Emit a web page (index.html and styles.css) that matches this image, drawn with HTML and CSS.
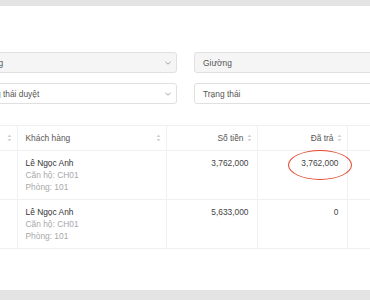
FILE: index.html
```html
<!DOCTYPE html>
<html lang="vi">
<head>
<meta charset="utf-8">
<title>Thanh toán</title>
<link rel="stylesheet" href="styles.css">
</head>
<body>
<div class="viewport">
  <div class="topbar"></div>
  <div class="content">
    <div class="filters">
      <div class="field disabled">
        <span class="field-text">Phòng</span>
        <svg class="chev" width="6" height="4" viewBox="0 0 6 4"><polyline points="0.5,0.8 3,3.2 5.5,0.8" fill="none" stroke="#9a9a9a" stroke-width="0.9"/></svg>
      </div>
      <div class="field disabled">
        <span class="field-text">Giường</span>
      </div>
      <div class="field">
        <span class="field-text">Trạng thái duyệt</span>
        <svg class="chev" width="6" height="4" viewBox="0 0 6 4"><polyline points="0.5,0.8 3,3.2 5.5,0.8" fill="none" stroke="#9a9a9a" stroke-width="0.9"/></svg>
      </div>
      <div class="field">
        <span class="field-text">Trạng thái</span>
      </div>
    </div>

    <table class="grid">
      <colgroup>
        <col class="c0"><col class="c1"><col class="c2"><col class="c3"><col class="c4">
      </colgroup>
      <thead>
        <tr>
          <th><div class="th end"><svg class="sort" width="5" height="8" viewBox="0 0 5 8"><path d="M2.5 0.5 L4.5 3 H0.5 Z M2.5 7.5 L4.5 5 H0.5 Z" fill="#d0d3d8"/></svg></div></th>
          <th><div class="th between"><span>Khách hàng</span><svg class="sort" width="5" height="8" viewBox="0 0 5 8"><path d="M2.5 0.5 L4.5 3 H0.5 Z M2.5 7.5 L4.5 5 H0.5 Z" fill="#d0d3d8"/></svg></div></th>
          <th><div class="th end"><span>Số tiền</span><svg class="sort" width="5" height="8" viewBox="0 0 5 8"><path d="M2.5 0.5 L4.5 3 H0.5 Z M2.5 7.5 L4.5 5 H0.5 Z" fill="#d0d3d8"/></svg></div></th>
          <th><div class="th end"><span>Đã trả</span><svg class="sort" width="5" height="8" viewBox="0 0 5 8"><path d="M2.5 0.5 L4.5 3 H0.5 Z M2.5 7.5 L4.5 5 H0.5 Z" fill="#d0d3d8"/></svg></div></th>
          <th></th>
        </tr>
      </thead>
      <tbody>
        <tr>
          <td></td>
          <td><div class="name">Lê Ngọc Anh</div><div class="sub">Căn hộ: CH01</div><div class="sub">Phòng: 101</div></td>
          <td class="num">3,762,000</td>
          <td class="num mark">3,762,000<span class="circle"></span></td>
          <td></td>
        </tr>
        <tr>
          <td></td>
          <td><div class="name">Lê Ngọc Anh</div><div class="sub">Căn hộ: CH01</div><div class="sub">Phòng: 101</div></td>
          <td class="num">5,633,000</td>
          <td class="num">0</td>
          <td></td>
        </tr>
      </tbody>
    </table>
  </div>
  <div class="bottombar"></div>
</div>
</body>
</html>
```

FILE: styles.css
```css
html, body {
  margin: 0;
  padding: 0;
  background: #ffffff;
}

body {
  font-family: "Liberation Sans", Arial, Helvetica, sans-serif;
  font-size: 8.4px;
  color: #333333;
}

.viewport {
  width: 370px;
  height: 300px;
  overflow: hidden;
  display: flex;
  flex-direction: column;
  background: #ffffff;
}

.topbar {
  height: 6px;
  flex: none;
  background: #e4e4e4;
}

.content {
  flex: 1;
  padding-top: 46px;
  overflow: hidden;
}

.bottombar {
  height: 10px;
  flex: none;
  background: #e4e4e4;
}

.filters {
  display: grid;
  grid-template-columns: 207px 207px;
  column-gap: 17px;
  row-gap: 10px;
  margin-left: -30px;
  width: 431px;
}

.field {
  height: 21px;
  box-sizing: border-box;
  border: 1px solid #e0e0e0;
  border-radius: 3px;
  background: #ffffff;
  display: flex;
  align-items: center;
  justify-content: space-between;
  padding: 0 5px 0 8px;
  color: #555555;
}

.field.disabled {
  background: #f5f5f5;
}

.field-text {
  line-height: 12px;
}

.chev {
  display: block;
  flex: none;
}

.grid {
  margin-top: 21px;
  margin-left: -43px;
  border-collapse: collapse;
  table-layout: fixed;
  width: 470px;
}

.c0 { width: 60px; }
.c1 { width: 149px; }
.c2 { width: 91px; }
.c3 { width: 90px; }
.c4 { width: 80px; }

.grid th,
.grid td {
  border: 1px solid #eff0f3;
  border-left: none;
  padding: 6px 8px;
  line-height: 12px;
  vertical-align: top;
  font-weight: normal;
}

.grid th {
  padding: 6px 5px 6px 8px;
  color: #555555;
  text-align: left;
}

.grid th + th,
.grid td + td {
  border-left: 1px solid #eff0f3;
}

.th {
  display: flex;
  align-items: center;
  gap: 3px;
  height: 12px;
}

.th.between { justify-content: space-between; }
.th.end { justify-content: flex-end; }

.sort {
  display: block;
  flex: none;
}

.name {
  color: #333333;
}

.sub {
  color: #a8a8a8;
}

.num {
  text-align: right;
  color: #444444;
}

.mark {
  position: relative;
}

.circle {
  position: absolute;
  left: 30px;
  top: -1px;
  width: 64px;
  height: 30px;
  box-sizing: border-box;
  border: 1.4px solid #e5442c;
  border-radius: 50%;
}
```
